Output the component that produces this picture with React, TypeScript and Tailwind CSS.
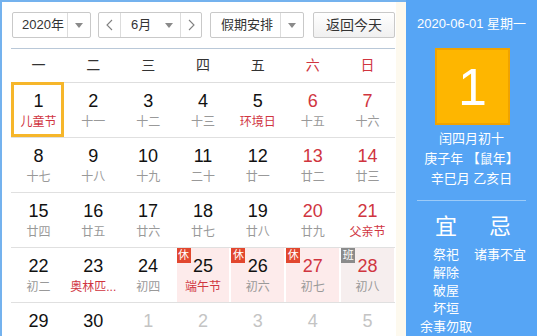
import React from "react";

type Day = {
  n: number;
  l: string;
  lred?: boolean;
  other?: boolean;
  badge?: "休" | "班";
  bg?: string;
  today?: boolean;
};

const rows: Day[][] = [
  [
    { n: 1, l: "儿童节", lred: true, today: true },
    { n: 2, l: "十一" },
    { n: 3, l: "十二" },
    { n: 4, l: "十三" },
    { n: 5, l: "环境日", lred: true },
    { n: 6, l: "十五" },
    { n: 7, l: "十六" },
  ],
  [
    { n: 8, l: "十七" },
    { n: 9, l: "十八" },
    { n: 10, l: "十九" },
    { n: 11, l: "二十" },
    { n: 12, l: "廿一" },
    { n: 13, l: "廿二" },
    { n: 14, l: "廿三" },
  ],
  [
    { n: 15, l: "廿四" },
    { n: 16, l: "廿五" },
    { n: 17, l: "廿六" },
    { n: 18, l: "廿七" },
    { n: 19, l: "廿八" },
    { n: 20, l: "廿九" },
    { n: 21, l: "父亲节", lred: true },
  ],
  [
    { n: 22, l: "初二" },
    { n: 23, l: "奥林匹...", lred: true },
    { n: 24, l: "初四" },
    { n: 25, l: "端午节", lred: true, badge: "休", bg: "bg-[#fdebeb]" },
    { n: 26, l: "初六", badge: "休", bg: "bg-[#fdebeb]" },
    { n: 27, l: "初七", badge: "休", bg: "bg-[#fdebeb]" },
    { n: 28, l: "初八", badge: "班", bg: "bg-[#f6eeee]" },
  ],
  [
    { n: 29, l: "" },
    { n: 30, l: "" },
    { n: 1, l: "", other: true },
    { n: 2, l: "", other: true },
    { n: 3, l: "", other: true },
    { n: 4, l: "", other: true },
    { n: 5, l: "", other: true },
  ],
];

const weekdays = ["一", "二", "三", "四", "五", "六", "日"];

function Arrow() {
  return (
    <svg width="8" height="5" viewBox="0 0 8 5">
      <path d="M0 0 L8 0 L4 5 Z" fill="#8a8a8a" />
    </svg>
  );
}

function Chevron({ dir }: { dir: "l" | "r" }) {
  return (
    <svg width="7" height="12" viewBox="0 0 7 12">
      <path
        d={dir === "l" ? "M6 1 L1 6 L6 11" : "M1 1 L6 6 L1 11"}
        fill="none"
        stroke="#808080"
        strokeWidth="1.1"
      />
    </svg>
  );
}

function Cell({ d, col }: { d: Day; col: number }) {
  const numColor = d.other
    ? "text-[#c4c4c4]"
    : col >= 5
    ? "text-[#d0353f]"
    : "text-[#111]";
  const lunarColor = d.lred ? "text-[#d0353f]" : "text-[#999]";
  return (
    <div className="relative h-full">
      <div className={`h-full mx-px flex flex-col items-center pt-[8px] ${d.bg ?? ""}`}>
        <div className={`text-[18px] leading-[21px] ${numColor}`}>{d.n}</div>
        {d.l && (
          <div className={`mt-[2px] text-[12px] leading-[16px] whitespace-nowrap ${lunarColor}`}>{d.l}</div>
        )}
      </div>
      {d.badge && (
        <div
          className={`absolute left-px top-0 w-[14px] h-[15px] text-[11px] leading-[15px] text-white text-center ${
            d.badge === "休" ? "bg-[#e2472f]" : "bg-[#8b8b8b]"
          }`}
        >
          {d.badge}
        </div>
      )}
      {d.today && (
        <div className="absolute left-0 top-[-1px] w-[53px] h-[55px] border-[3px] border-[#f6b62a]" />
      )}
    </div>
  );
}

export default function App() {
  return (
    <div className="flex w-[537px] h-[336px] overflow-hidden font-['Liberation_Sans','Noto_Sans_CJK_SC',sans-serif] bg-white">
      {/* left */}
      <div className="flex border-t-2 border-l-2 border-[#74b2ee] h-full">
        <div className="w-[394px] bg-white pl-[9px] pt-[10px]">
          {/* controls */}
          <div className="flex items-start h-[26px] text-[13px] text-[#333]">
            <div className="flex items-center w-[79px] h-[26px] border border-[#c9c9c9] rounded-[2px] bg-white ml-px">
              <span className="pl-[9px] w-[54px]">2020年</span>
              <div className="h-full w-px bg-[#dcdcdc]" />
              <div className="flex-1 flex justify-center">
                <Arrow />
              </div>
            </div>
            <div className="flex items-center ml-[7px] w-[104px] h-[26px] border border-[#c9c9c9] rounded-[2px] bg-white">
              <div className="w-[21px] h-full flex items-center justify-center">
                <Chevron dir="l" />
              </div>
              <div className="h-full w-px bg-[#dcdcdc]" />
              <div className="flex items-center w-[59px] h-full">
                <span className="pl-[10px] w-[44px]">6月</span>
                <Arrow />
              </div>
              <div className="h-full w-px bg-[#dcdcdc]" />
              <div className="flex-1 h-full flex items-center justify-center">
                <Chevron dir="r" />
              </div>
            </div>
            <div className="flex items-center ml-[8px] w-[94px] h-[26px] border border-[#c9c9c9] rounded-[2px] bg-white">
              <span className="pl-[10px] w-[69px] whitespace-nowrap">假期安排</span>
              <div className="h-full w-px bg-[#dcdcdc]" />
              <div className="flex-1 flex justify-center">
                <Arrow />
              </div>
            </div>
            <div className="flex items-center justify-center ml-[9px] w-[82px] h-[26px] border border-[#c9c9c9] rounded-[2px] bg-gradient-to-b from-[#ffffff] to-[#f0f0f0] text-[14px]">
              返回今天
            </div>
          </div>
          {/* grid */}
          <div className="w-[384px] mt-[10px] border-t border-[#b9c8d8]">
            <div className="grid grid-cols-7 h-[34px] border-b border-[#dedede] items-center text-[14px]">
              {weekdays.map((w, i) => (
                <div
                  key={w}
                  className={`text-center ${i >= 5 ? "text-[#d0353f]" : "text-[#333]"}`}
                >
                  {w}
                </div>
              ))}
            </div>
            {rows.map((r, ri) => (
              <div
                key={ri}
                className="grid grid-cols-7 h-[55px] border-b border-[#e0e0e0]"
              >
                {r.map((d, ci) => (
                  <Cell key={ci} d={d} col={ci} />
                ))}
              </div>
            ))}
          </div>
        </div>
        <div className="w-[10px] bg-[#fdf9ee]" />
      </div>
      {/* right */}
      <div className="flex-1 h-full bg-[#56a5f5] flex flex-col text-white">
        <div className="pt-[16px] text-center text-[13px] leading-[16px] whitespace-nowrap">
          2020-06-01 星期一
        </div>
        <div className="mt-[16px] ml-[29px] w-[75px] h-[77px] border-2 border-[#f0a300] bg-[#feb600] flex items-center justify-center text-[52px] leading-none">
          1
        </div>
        <div className="mt-[4px] text-center text-[13px] leading-[20px] whitespace-nowrap">
          <div>闰四月初十</div>
          <div>庚子年 【鼠年】</div>
          <div>辛巳月 乙亥日</div>
        </div>
        <div className="mt-[11px] mx-[11px] h-px bg-[#9ccbf8]" />
        <div className="grid grid-cols-2 w-[108px] ml-[13px] mt-[13px]">
          <div className="text-center text-[22px] leading-[26px]">宜</div>
          <div className="text-center text-[22px] leading-[26px]">忌</div>
          <div className="mt-[6px] text-center text-[13px] leading-[18px] whitespace-nowrap">
            <div>祭祀</div>
            <div>解除</div>
            <div>破屋</div>
            <div>坏垣</div>
            <div>余事勿取</div>
          </div>
          <div className="mt-[6px] text-center text-[13px] leading-[18px] whitespace-nowrap">
            <div>诸事不宜</div>
          </div>
        </div>
      </div>
    </div>
  );
}
